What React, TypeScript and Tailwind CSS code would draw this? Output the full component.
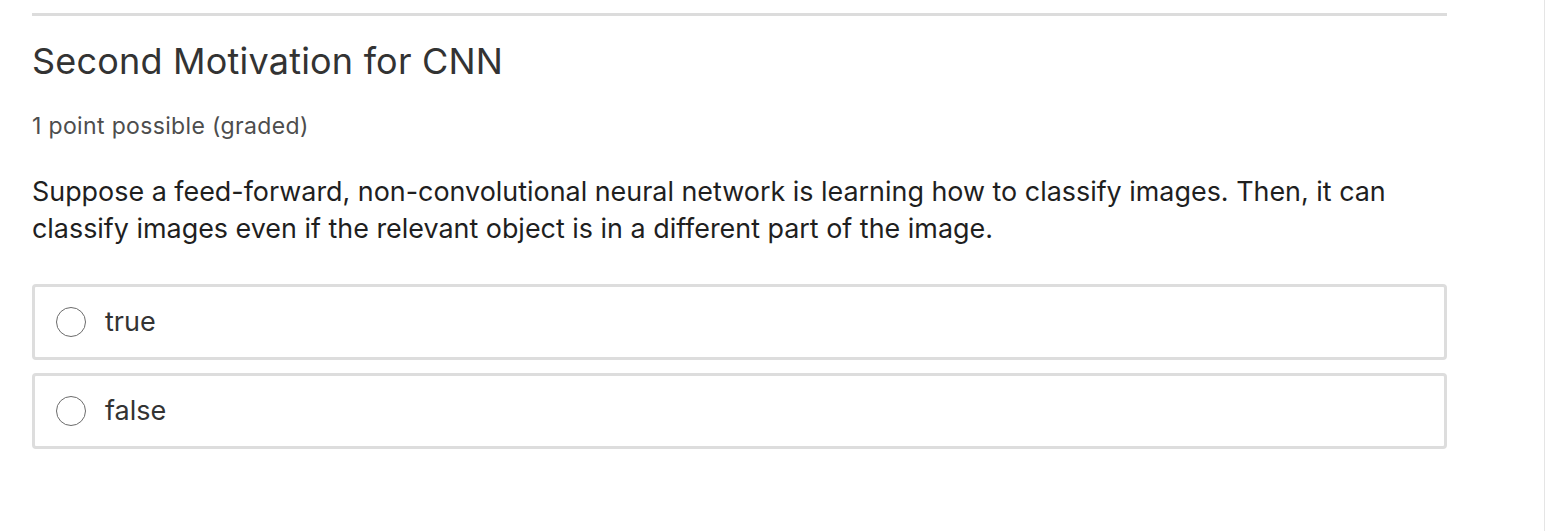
import React from "react"

const options = ["true", "false"]

export default function App() {
  return (
    <div className="min-h-[531px] w-full bg-white border-r border-[#e5e5e5]" style={{ fontFamily: "Inter, 'Noto Sans', sans-serif" }}>
      <div className="pl-[32px] pr-[97px] pt-[13px]">
        <div className="h-[3px] bg-[#dcdcdc]" />
        <h2 className="mt-[22px] text-[36px] leading-[46px] text-[#333333] font-normal tracking-[0.2px]">
          Second Motivation for CNN
        </h2>
        <div className="mt-[28px] text-[23px] leading-[28px] tracking-[0.35px] text-[#4d4d4d]">1 point possible (graded)</div>
        <p className="mt-[33px] text-[26.9px] leading-[37px] text-[#1f1f1f]">
          Suppose a feed-forward, non-convolutional neural network is learning how to classify images. Then, it can classify images even if the relevant object is in a different part of the image.
        </p>
        <div className="mt-[37px] flex flex-col gap-[13px]">
          {options.map((o) => (
            <label key={o} className="flex h-[76px] items-center rounded-[4px] border-[3px] border-[#dddddd] pl-[21px]">
              <span className="h-[30px] w-[30px] rounded-full border-[1.5px] border-[#6b6b6b] bg-white" />
              <span className="ml-[19px] text-[27px] text-[#333333]">{o}</span>
            </label>
          ))}
        </div>
      </div>
    </div>
  )
}
